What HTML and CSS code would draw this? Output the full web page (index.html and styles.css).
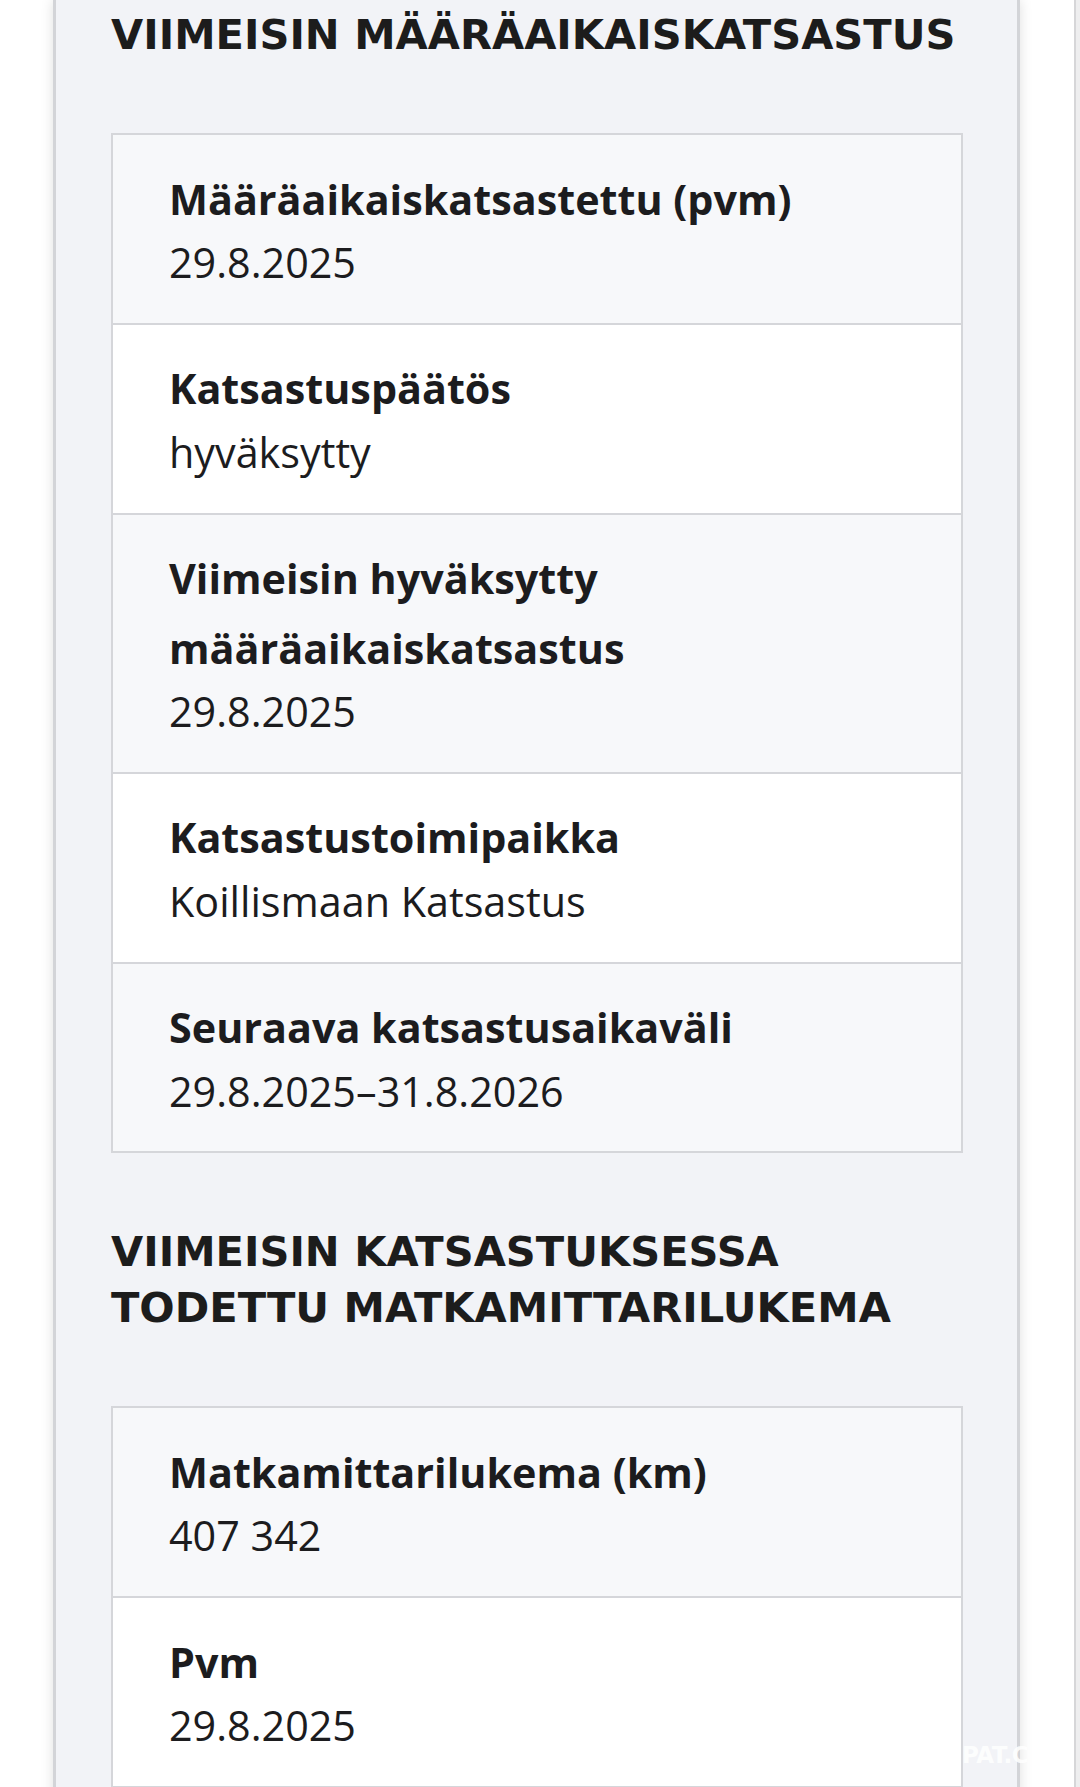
FILE: index.html
```html
<!DOCTYPE html>
<html lang="fi">
<head>
<meta charset="utf-8">
<title>Katsastustiedot</title>
<link rel="stylesheet" href="styles.css">
</head>
<body>
<div class="page">
  <section class="panel">
    <h2 class="heading">VIIMEISIN MÄÄRÄAIKAISKATSASTUS</h2>
    <dl class="table">
      <div class="row alt">
        <dt class="label">Määräaikaiskatsastettu (pvm)</dt>
        <dd class="value">29.8.2025</dd>
      </div>
      <div class="row">
        <dt class="label">Katsastuspäätös</dt>
        <dd class="value">hyväksytty</dd>
      </div>
      <div class="row alt">
        <dt class="label">Viimeisin hyväksytty määräaikaiskatsastus</dt>
        <dd class="value">29.8.2025</dd>
      </div>
      <div class="row">
        <dt class="label">Katsastustoimipaikka</dt>
        <dd class="value">Koillismaan Katsastus</dd>
      </div>
      <div class="row alt">
        <dt class="label">Seuraava katsastusaikaväli</dt>
        <dd class="value">29.8.2025–31.8.2026</dd>
      </div>
    </dl>

    <h2 class="heading">VIIMEISIN KATSASTUKSESSA TODETTU MATKAMITTARILUKEMA</h2>
    <dl class="table">
      <div class="row alt">
        <dt class="label">Matkamittarilukema (km)</dt>
        <dd class="value">407 342</dd>
      </div>
      <div class="row">
        <dt class="label">Pvm</dt>
        <dd class="value">29.8.2025</dd>
      </div>
    </dl>
  </section>
  <span class="watermark">PAT.C</span>
</div>
<div class="edge"></div>
</body>
</html>
```
FILE: styles.css
```css
html, body {
  margin: 0;
  padding: 0;
  background: #ffffff;
}

body {
  display: flex;
  height: 1787px;
  overflow: hidden;
  font-family: "Open Sans", "Liberation Sans", sans-serif;
  color: #1c1c1e;
}

.page {
  flex: 1;
  position: relative;
  padding: 0 54px 0 53px;
}

.edge {
  width: 4px;
  border-left: 2px solid #d6d6d8;
  background: #eeeeef;
}

.panel {
  background: #f2f3f7;
  border-left: 3px solid #d3d4d8;
  border-right: 3px solid #d3d4d8;
  box-shadow: 0 0 12px rgba(0, 0, 0, 0.13);
  padding: 7px 54px 200px 55px;
  min-height: 1900px;
}

.heading {
  margin: 0 0 70px 0;
  font-family: "DejaVu Sans", "Liberation Sans", sans-serif;
  font-weight: 700;
  font-size: 41.6px;
  line-height: 56px;
  color: #1c1c1c;
}

.table + .heading {
  margin-top: 71px;
}

.table {
  margin: 0;
  border: 2px solid #d5d6da;
  border-bottom: 0;
  background: #ffffff;
}

.row {
  padding: 29.5px 20px 31.2px 56px;
  border-bottom: 2px solid #d5d6da;
  background: #ffffff;
}

.row.alt {
  background: #f7f8fa;
}

.label {
  margin: 0;
  font-weight: 700;
  font-size: 41.3px;
  line-height: 69.5px;
}

.value {
  margin: 0;
  font-weight: 400;
  font-size: 41.3px;
  line-height: 57.6px;
}

.watermark {
  position: absolute;
  left: 962px;
  top: 1742px;
  font-family: "DejaVu Sans", sans-serif;
  font-weight: 700;
  font-size: 23px;
  letter-spacing: -0.5px;
  color: rgba(255, 255, 255, 0.85);
}
```
